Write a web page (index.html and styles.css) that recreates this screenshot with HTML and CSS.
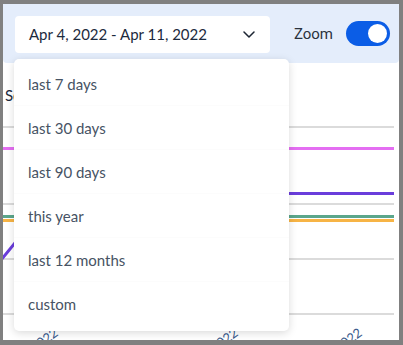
FILE: index.html
```html
<!DOCTYPE html>
<html>
<head>
    <title>Traffic</title>
    <link rel="stylesheet" href="styles.css">
</head>
<body>
    <div id="frame">
        <div id="toolbar">
            <button id="range" class="picker">
                <span>Apr 4, 2022 - Apr 11, 2022</span>
                <svg class="chevron" width="12" height="7" viewBox="0 0 12 7">
                    <path d="M1 1l5 5 5-5" fill="none" stroke="#1c2533" stroke-width="1.5" stroke-linecap="round" stroke-linejoin="round"/>
                </svg>
            </button>
            <label class="zoom">
                <span>Zoom</span>
                <span class="switch on"><span class="knob"></span></span>
            </label>
        </div>

        <div id="chart">
            <svg width="396" height="276" viewBox="0 0 396 276">
                <text x="2" y="37" class="title">Sessions</text>
                <g stroke="#cfcfcf" stroke-width="1.5">
                    <line x1="0" y1="63" x2="391" y2="63"/>
                    <line x1="0" y1="140" x2="391" y2="140"/>
                    <line x1="0" y1="195" x2="391" y2="195"/>
                    <line x1="0" y1="250" x2="391" y2="250"/>
                </g>
                <g stroke-width="3" fill="none">
                    <polyline points="0,84.5 391,84.5" stroke="#e46ef2"/>
                    <polyline points="-2,196 60,120 120,129.5 391,129.5" stroke="#6a3ddb"/>
                    <polyline points="0,152.5 391,152.5" stroke="#5ba68b"/>
                    <polyline points="0,156.5 391,156.5" stroke="#f7b445"/>
                </g>
                <g class="ticks">
                    <text transform="translate(56 271) rotate(-35)" text-anchor="end">Apr 5, 2022</text>
                    <text transform="translate(236 271) rotate(-35)" text-anchor="end">Apr 8, 2022</text>
                    <text transform="translate(360 271) rotate(-35)" text-anchor="end">Apr 10, 2022</text>
                </g>
            </svg>
        </div>

        <ul id="menu" class="dropdown">
            <li>last 7 days</li>
            <li>last 30 days</li>
            <li>last 90 days</li>
            <li>this year</li>
            <li>last 12 months</li>
            <li>custom</li>
        </ul>
    </div>
</body>
</html>
```

FILE: styles.css
```css
body {
    margin: 0;
    padding: 4px 4px 5px 3px;
    background-color: #808080;
    font-family: Lato, "Noto Sans", sans-serif;
}

#frame {
    position: relative;
    height: 336px;
    background-color: #ffffff;
    overflow: hidden;
}

#toolbar {
    display: flex;
    align-items: center;
    height: 59px;
    padding: 0 9px 0 12px;
    background-color: #e4edfb;
    border-radius: 0 0 4px 4px;
}

.picker {
    display: flex;
    align-items: center;
    justify-content: space-between;
    width: 255px;
    height: 37px;
    margin-top: 1px;
    padding: 0 15px 0 14px;
    background-color: #ffffff;
    border: none;
    border-radius: 4px;
    font-family: Lato, sans-serif;
    font-size: 15px;
    color: #1c2a3d;
}

.chevron {
    margin-top: 1px;
}

.zoom {
    display: flex;
    align-items: center;
    margin-left: auto;
    font-family: Roboto, sans-serif;
    font-size: 15px;
    color: #2a323d;
}

.switch {
    display: flex;
    justify-content: flex-end;
    align-items: center;
    width: 44px;
    height: 25px;
    margin-left: 13px;
    padding: 0 3px;
    box-sizing: border-box;
    border-radius: 13px;
    background-color: #0b5de6;
}

.knob {
    width: 19px;
    height: 19px;
    border-radius: 50%;
    background-color: #ffffff;
}

#chart {
    margin-top: 1px;
}

#chart svg {
    display: block;
}

.title {
    font-family: Lato, sans-serif;
    font-size: 15px;
    fill: #1c2a3d;
}

.ticks text {
    font-family: Lato, sans-serif;
    font-size: 13px;
    fill: #3a5a8c;
}

/* date range menu, open over the chart */
.dropdown {
    position: absolute;
    left: 11px;
    top: 55px;
    width: 275px;
    margin: 0;
    padding: 3px 0 5px;
    list-style: none;
    background-color: #ffffff;
    border-radius: 5px;
    box-shadow: 0 2px 8px rgba(0, 0, 0, 0.15);
}

.dropdown li {
    height: 44px;
    line-height: 44px;
    padding-left: 14px;
    font-size: 15px;
    color: #475364;
    border-bottom: 1px solid #fcfcfc;
    box-sizing: border-box;
}

.dropdown li:last-child {
    border-bottom: none;
}
```
